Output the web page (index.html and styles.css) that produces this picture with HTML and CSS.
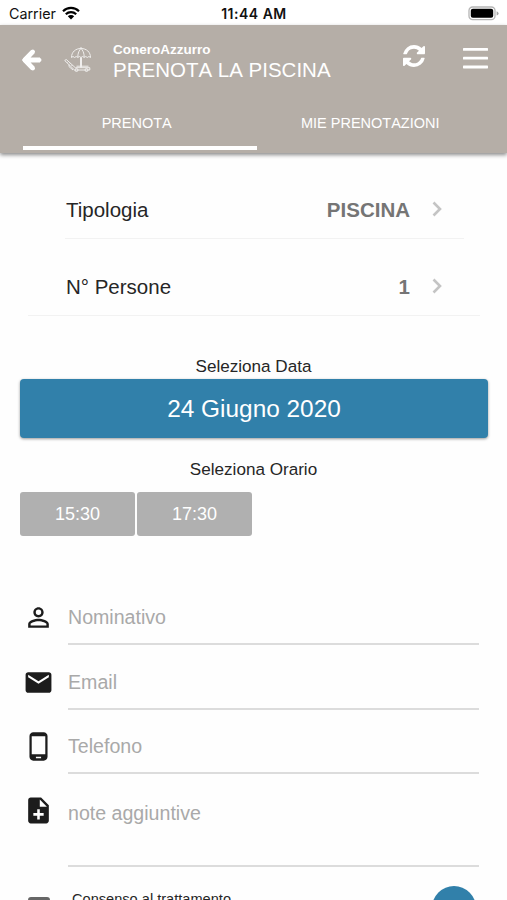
FILE: index.html
```html
<!DOCTYPE html>
<html lang="it">
<head>
  <meta charset="UTF-8">
  <meta name="viewport" content="width=device-width, initial-scale=1">
  <title>Prenota la piscina - ConeroAzzurro</title>
  <link rel="stylesheet" href="styles.css">
</head>
<body>
  <div class="status-bar">
    <div class="status-carrier">
      <span>Carrier</span>
      <svg class="wifi" viewBox="0 0 18 14">
        <path d="M1 5.2a11.5 11.5 0 0 1 16 0M3.8 8.2a7.5 7.5 0 0 1 10.4 0" fill="none" stroke="#000" stroke-width="2.2"/>
        <path d="M9 13.6L5.8 10.3a4.6 4.6 0 0 1 6.4 0z"/>
      </svg>
    </div>
    <div class="status-time">11:44 AM</div>
    <svg class="battery" viewBox="0 0 31 15">
      <rect x="1" y="1" width="26" height="12.6" rx="3.6" fill="#fff" stroke="#b5b5b5" stroke-width="1.3"/>
      <rect x="2.8" y="2.8" width="22.4" height="9" rx="2" fill="#000"/>
      <path d="M28.6 5.2q2 .8 2 2.2t-2 2.2z" fill="#a5a5a5"/>
    </svg>
  </div>

  <header class="header">
    <div class="toolbar">
      <svg class="back" viewBox="0 0 20 22">
        <path d="M11.600 2.300L3.300 11l8.300 8.700M4 11h14.500" fill="none" stroke="#fff" stroke-width="4.800" stroke-linejoin="round"/>
        <path d="M11.400 2.600L3.300 11l8.100 8.400M4 11h14" fill="none" stroke="#fff" stroke-width="4" stroke-linecap="round"/>
      </svg>
      <svg class="logo" viewBox="0 0 28 27" fill="none" stroke="#fff" stroke-width="1">
        <path d="M7.500 11.500C7.500 6 11.500 2.500 17 2.500s9.500 3.500 9.500 9q-1.600-2-3.200 0-1.500-2-3.100 0-1.600-2-3.200 0-1.600-2-3.200 0-1.600-2-3.200 0-1.600-2-3.100 0z"/>
        <path d="M17 1v1.500M13.800 11c0-4 1.500-7 3.200-8.500 1.700 1.500 3.200 4.500 3.200 8.500M16.500 11.500v10M17.500 11.500v10"/>
        <path d="M.700 14.500l1.600-1 9 8.200h14.500v2.300H10.500z"/>
        <path d="M3.500 16.500l1-1M5.500 18.300l1-1M7.500 20l1-1M5 18.800v1.800l4 3.400M12.500 20.200h12"/>
        <circle cx="12.500" cy="24" r="1.500"/><circle cx="22.500" cy="24" r="1.500"/>
      </svg>
      <div class="titles">
        <div class="brand">ConeroAzzurro</div>
        <div class="title">PRENOTA LA PISCINA</div>
      </div>
      <svg class="refresh" viewBox="0 0 1536 1536" fill="#fff">
        <path d="M1511 928q0 5-1 7-64 268-268 434.500T764 1536q-146 0-282.500-55T238 1324l-129 129q-19 19-45 19t-45-19-19-45V960q0-26 19-45t45-19h448q26 0 45 19t19 45-19 45l-137 137q71 66 161 102t187 36q134 0 250-65t186-179q11-17 53-117 8-23 30-23h192q13 0 22.500 9.500t9.500 22.500zm25-800v448q0 26-19 45t-45 19h-448q-26 0-45-19t-19-45 19-45l138-138Q969 256 768 256q-134 0-250 65T332 500q-11 17-53 117-8 23-30 23H50q-13 0-22.500-9.500T18 608v-7q65-268 270-434.500T768 0q146 0 284 55.500T1297 212l130-129q19-19 45-19t45 19 19 45z"/>
      </svg>
      <svg class="menu" viewBox="0 0 25 21" fill="#fff">
        <rect y="0" width="25" height="2.800" rx=".6"/><rect y="8.800" width="25" height="2.800" rx=".6"/><rect y="17.600" width="25" height="2.800" rx=".6"/>
      </svg>
    </div>
    <nav class="tabs">
      <div class="tab active">PRENOTA</div>
      <div class="tab">MIE PRENOTAZIONI</div>
    </nav>
  </header>

  <main>
    <div class="option tipologia">
      <span>Tipologia</span>
      <b>PISCINA</b>
      <svg class="chevron" viewBox="0 0 10 16"><path d="M1.500 1.500L8 8l-6.500 6.500"/></svg>
    </div>
    <div class="option persone">
      <span>N° Persone</span>
      <b>1</b>
      <svg class="chevron" viewBox="0 0 10 16"><path d="M1.500 1.500L8 8l-6.500 6.500"/></svg>
    </div>

    <div class="label">Seleziona Data</div>
    <button class="date">24 Giugno 2020</button>
    <div class="label orario">Seleziona Orario</div>
    <div class="slots">
      <button class="slot">15:30</button>
      <button class="slot">17:30</button>
    </div>

    <form class="form">
      <div class="field">
        <svg class="icon" viewBox="0 0 24 24"><path d="M12 5.900a2.100 2.100 0 1 1 0 4.200 2.100 2.100 0 0 1 0-4.200m0 9c2.970 0 6.100 1.460 6.100 2.100v1.100H5.900V17c0-.64 3.130-2.100 6.100-2.100M12 4C9.790 4 8 5.790 8 8s1.790 4 4 4 4-1.790 4-4-1.790-4-4-4zm0 9c-2.670 0-8 1.340-8 4v3h16v-3c0-2.660-5.330-4-8-4z"/></svg>
        <input type="text" placeholder="Nominativo">
      </div>
      <div class="field">
        <svg class="icon" viewBox="0 0 24 24"><path d="M20 4H4c-1.100 0-1.990.9-1.990 2L2 18c0 1.100.9 2 2 2h16c1.100 0 2-.9 2-2V6c0-1.100-.9-2-2-2zm0 4l-8 5-8-5V6l8 5 8-5v2z"/></svg>
        <input type="email" placeholder="Email">
      </div>
      <div class="field">
        <svg class="icon" viewBox="0 0 24 24"><path d="M16 1H8C6.340 1 5 2.340 5 4v16c0 1.660 1.340 3 3 3h8c1.660 0 3-1.340 3-3V4c0-1.660-1.340-3-3-3zm-2 20h-4v-1h4v1zm3.250-3H6.750V4h10.500v14z"/></svg>
        <input type="tel" placeholder="Telefono">
      </div>
      <div class="field note">
        <svg class="icon" viewBox="0 0 24 24"><path d="M14 2H6c-1.100 0-1.990.9-1.990 2L4 20c0 1.100.89 2 1.990 2H18c1.100 0 2-.9 2-2V8l-6-6zm2 14h-3v3h-2v-3H8v-2h3v-3h2v3h3v2zm-3-7V3.500L18.500 9H13z"/></svg>
        <textarea placeholder="note aggiuntive"></textarea>
      </div>
      <div class="consent">
        <span class="checkbox"></span>
        <span class="consent-text">Consenso al trattamento</span>
        <span class="info"></span>
      </div>
    </form>
  </main>
</body>
</html>
```

FILE: styles.css
```css
* { box-sizing: border-box; }
html, body { height: 100%; overflow: hidden; }
body { margin: 0; background: #fefefe; color: #262626; font-family: "Liberation Sans", Arial, sans-serif; }
svg { display: block; flex: none; }
button, input, textarea { font-family: inherit; border: 0; margin: 0; padding: 0; }

/* Barra di stato */
.status-bar { display: grid; grid-template-columns: 1fr auto 1fr; align-items: center; height: 25px; padding: 2px 8px 0 9px; background: #fff; color: #111; font: 14.3px/22px Inter, sans-serif; }
.status-carrier { display: flex; align-items: center; gap: 6px; }
.status-time { font-weight: 600; font-size: 14px; letter-spacing: .5px; }
.wifi { width: 18px; height: 14px; margin-top: -1px; }
.battery { width: 31px; height: 15px; justify-self: end; }

/* Testata */
.header { height: 128px; background: #b5aea7; color: #fff; box-shadow: 0 2px 4px rgba(0, 0, 0, .45); }
.toolbar { display: flex; align-items: flex-start; height: 74px; padding: 0 19px 0 21px; }
.back { width: 21px; height: 22px; margin-top: 24px; }
.logo { width: 28px; height: 27px; margin: 21px 0 0 22px; opacity: .8; }
.titles { flex: 1; margin: 16px 0 0 21px; white-space: nowrap; }
.brand { font-size: 13.5px; font-weight: bold; line-height: 17px; }
.title { font-size: 20.5px; line-height: 24px; font-kerning: none; }
.refresh { width: 22px; height: 22px; margin-top: 20px; }
.menu { width: 25px; height: 21px; margin: 23px 0 0 38px; }
.tabs { display: flex; height: 54px; padding: 0 17px 0 23px; }
.tab { flex: 1; height: 51px; padding: 14px 6px 0 0; font-size: 14.5px; line-height: 20px; text-align: center; font-kerning: none; }
.tab.active { border-bottom: 4px solid #fff; }

/* Opzioni */
.option { display: flex; align-items: center; height: 77px; border-bottom: 1px solid #f2f2f2; font-size: 20.5px; }
.option b { margin-left: auto; color: #757575; }
.tipologia { height: 58px; margin: 28px 43px 0 65px; padding: 0 22px 0 1px; }
.persone { margin: 0 27px 0 28px; padding: 19px 38px 0; }
.chevron { width: 10px; height: 16px; margin: -2px 0 0 22px; fill: none; stroke: #c4c4c4; stroke-width: 2.6; }

.label { margin-top: 40px; font-size: 17.1px; line-height: 22px; text-align: center; }
.date { display: block; width: 468px; height: 59px; margin: 1px 0 0 20px; border-radius: 4px; background: #3180aa; color: #fff; font-size: 24.4px; box-shadow: 0 1px 3px rgba(0, 0, 0, .4); }
.label.orario { margin-top: 21px; }
.slots { display: flex; gap: 2px; margin: 11px 0 0 20px; }
.slot { width: 115px; height: 44px; border-radius: 3px; background: #b0b0b0; color: #fff; font-size: 18px; }

/* Dati del cliente */
.form { margin: 50px 28px 0 23px; }
.field { display: flex; align-items: flex-start; height: 64.7px; }
.icon { width: 31px; height: 31px; margin-top: 16px; fill: #1c1c1c; }
.field input, .field textarea { flex: 1; height: 59px; margin-left: 14px; border-bottom: 2px solid #dcdcdc; background: none; font-size: 19.6px; outline: none; resize: none; }
.field input { padding-top: 6px; }
.field textarea { height: 87px; padding-top: 21px; line-height: 24px; overflow: hidden; }
.field ::placeholder { color: #a9a9a9; opacity: 1; }
.field.note { height: 101px; }
.field.note .icon { margin-top: 15px; }
.consent { display: flex; align-items: flex-start; }
.checkbox { width: 22px; height: 22px; margin: 16px 0 0 5px; border: 3px solid #666; border-radius: 3px; }
.consent-text { margin: 9px 0 0 22px; font-size: 14.6px; line-height: 18px; }
.info { width: 44px; height: 44px; margin: 5px 3px 0 auto; border-radius: 50%; background: #3180aa; }
```
